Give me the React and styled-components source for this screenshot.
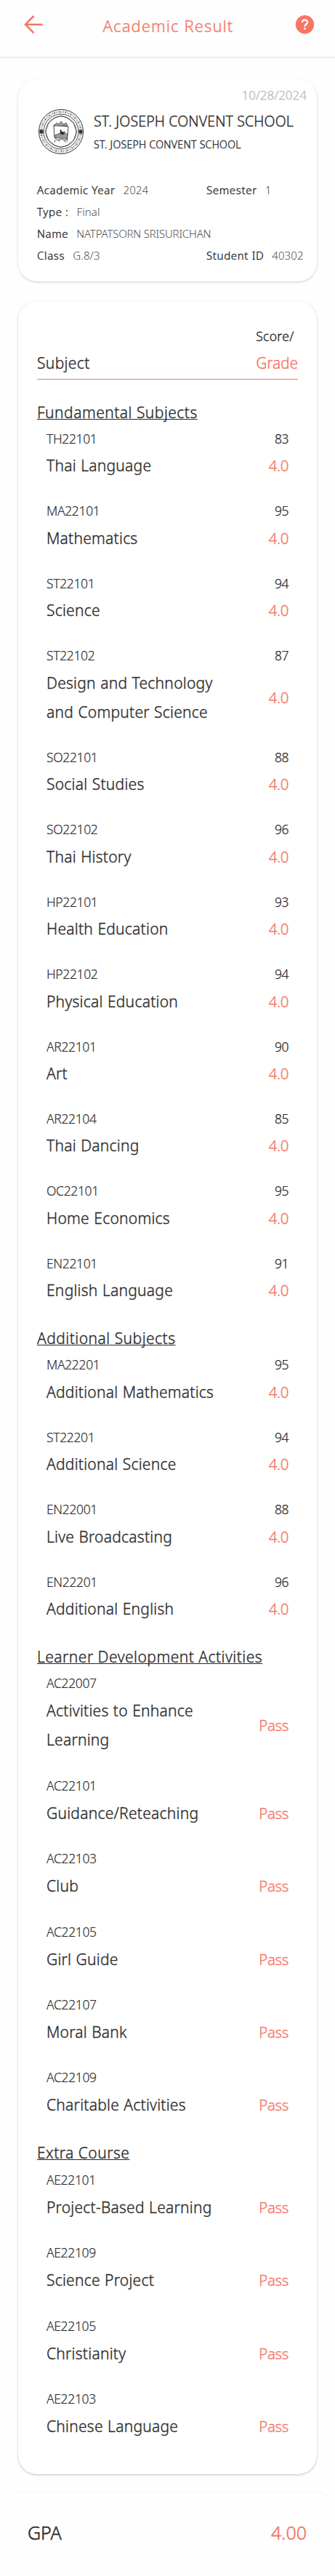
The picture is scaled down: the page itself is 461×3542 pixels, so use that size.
import React from "react";
import styled, { createGlobalStyle } from "styled-components";

const CORAL = "#f77567";

const GlobalStyle = createGlobalStyle`
  * { box-sizing: border-box; }
  body {
    margin: 0;
    background: #fefefe;
    color: #2a2a2a;
    font-family: "Noto Sans", "Open Sans", sans-serif;
    font-weight: 300;
    -webkit-text-stroke: 0.35px currentColor;
  }
`;

const Page = styled.div`
  width: 461px;
  height: 3542px;
  display: flex;
  flex-direction: column;
  overflow: hidden;
`;

const TopBar = styled.header`
  height: 80px;
  flex: none;
  display: flex;
  align-items: flex-start;
  justify-content: space-between;
  padding: 20px 28px 0 32px;
  border-bottom: 2px solid #ececec;
`;

const Title = styled.h1`
  margin: 0 2px 0 0;
  font-size: 22px;
  line-height: 30px;
  font-weight: 300;
  letter-spacing: 1.1px;
  color: ${CORAL};
`;

const Card = styled.section`
  flex: none;
  width: 411px;
  margin-left: 25px;
  border-radius: 26px;
  background: #fff;
  box-shadow: 0 1px 3px rgba(0, 0, 0, 0.2);
`;

const InfoCard = styled(Card)`
  height: 279px;
  margin-top: 28px;
  padding: 13px 14px 0 26px;
`;

const DateText = styled.div`
  text-align: right;
  font-size: 17px;
  line-height: 20px;
  color: #bbb;
`;

const School = styled.div`
  display: flex;
  gap: 13px;
  margin: 8px 0 0 1px;
`;

const SchoolNames = styled.div`
  padding-top: 1px;
`;

const SchoolName = styled.div`
  font-size: ${(p) => (p.$small ? 14 : 19.5)}px;
  line-height: ${(p) => (p.$small ? 31 : 33)}px;
  letter-spacing: ${(p) => (p.$small ? 0.32 : 0.15)}px;
  white-space: nowrap;
`;

const Details = styled.div`
  margin-top: 31.5px;
  display: grid;
  grid-template-columns: 233px 1fr;
  grid-auto-rows: 30.3px;
`;

const Detail = styled.div`
  font-size: 15px;
  line-height: 30px;
  letter-spacing: 0.65px;
  white-space: nowrap;
  grid-column: ${(p) => (p.$wide ? "1 / 3" : "auto")};
`;

const Value = styled.span`
  margin-left: 11px;
  letter-spacing: ${(p) => (p.$tight ? -0.2 : 0.1)}px;
  color: #4c4c4c;
  -webkit-text-stroke: 0;
`;

const ResultCard = styled(Card)`
  height: 2988px;
  margin-top: 27px;
  padding: 29px 26px 0;
  box-shadow: 0 1px 3px rgba(0, 0, 0, 0.25);
`;

const TableHead = styled.div`
  display: flex;
  justify-content: space-between;
  align-items: flex-end;
  height: 79px;
  padding-bottom: 1px;
  border-bottom: 1px solid ${CORAL};
  margin-bottom: 25px;
  font-size: 21px;
  line-height: 42px;
  letter-spacing: 0.35px;
`;

const ScoreHead = styled.div`
  font-size: 17.5px;
  line-height: 31px;
  letter-spacing: 0.3px;
`;

const GradeHead = styled.div`
  color: ${CORAL};
  letter-spacing: -0.15px;
`;

const GroupTitle = styled.h2`
  margin: 0;
  font-size: 21px;
  line-height: 40px;
  font-weight: 300;
  letter-spacing: 0.48px;
  text-decoration: underline;
  text-decoration-thickness: 1px;
  text-underline-offset: 1px;
  text-decoration-skip-ink: none;
  white-space: nowrap;
`;

const Row = styled.div`
  display: grid;
  grid-template-columns: 241px 1fr;
  grid-template-rows: ${(p) => (p.$pass ? 34.4 : 33.45)}px auto;
  align-items: center;
  padding: 0 13px 26px;
`;

const Code = styled.div`
  font-size: 17.5px;
  line-height: 33.4px;
  letter-spacing: -0.35px;
  -webkit-text-stroke-width: 0.15px;
`;

const Score = styled(Code)`
  text-align: right;
  letter-spacing: -0.5px;
  -webkit-text-stroke-width: 0.25px;
`;

const Subject = styled.div`
  font-size: 21px;
  line-height: 40px;
  letter-spacing: 0.25px;
  word-spacing: 0.6px;
`;

const Grade = styled(Subject)`
  text-align: right;
  font-size: 20.5px;
  letter-spacing: -0.4px;
  color: ${CORAL};
`;

const Footer = styled.footer`
  flex: 1;
  margin-top: 25px;
  border-radius: 26px 26px 0 0;
  box-shadow: 0 -1px 2px rgba(0, 0, 0, 0.04);
  display: flex;
  justify-content: space-between;
  padding: 35px 39px 0 38px;
  font-size: 25px;
  line-height: 40px;
  -webkit-text-stroke-width: 0.5px;
`;

const Gpa = styled.span`
  color: ${CORAL};
`;

const BackIcon = () => (
  <svg width="28" height="28" viewBox="0 0 28 28" fill="none" stroke={CORAL} strokeWidth="2.6">
    <path d="M26.500 13.700H3M14.500 2L3 13.700L14.500 25.300" />
  </svg>
);

const HelpIcon = () => (
  <svg width="28" height="28" viewBox="0 0 28 28">
    <circle cx="14.5" cy="13.7" r="12.7" fill={CORAL} />
    <path d="M10.800 11Q11 7.300 14.500 7.300Q18 7.500 18 10.600Q18 12.200 16.200 13.500Q14.500 14.700 14.500 16.500" fill="none" stroke="#fff" strokeWidth="2.300" />
    <circle cx="14.5" cy="19.4" r="1.4" fill="#fff" />
  </svg>
);

const Crest = () => (
  <svg width="64" height="64" viewBox="0 0 64 64" fill="none" stroke="#333">
    <circle cx="32" cy="32" r="30.5" strokeWidth="1" />
    <circle cx="32" cy="32" r="27.200" strokeWidth="3.200" strokeDasharray="1 1.400 1.800 1.200 .7 1.600" opacity=".6" />
    <circle cx="32" cy="32" r="24" strokeWidth=".9" />
    <circle cx="32" cy="32" r="21" strokeWidth=".8" />
    <path d="M32 10L41 13.500L49 20L53.500 32L49 44L41 50.500L32 54L23 50.500L15 44L10.500 32L15 20L23 13.500Z" strokeWidth=".7" />
    <path d="M2.500 32h5M56.500 32h5" strokeWidth="5" />
    <path d="M22 23L42 25L40.500 42L37 44L32 42L27 44L23 40Z" strokeWidth=".9" fill="#fff" />
    <path d="M22 24L26 20L29 22L32 18L35 22L39 20L41 24Z" strokeWidth=".8" fill="#aaa" />
    <path d="M23 37L31 34L41 35L40 42L32 41L24 41Z" fill="#999" strokeWidth=".6" />
    <path d="M31 29L34 33L38 32L35 36L31 35Z" fill="#222" strokeWidth=".5" />
    <path d="M24 43L23 47M29 43.500L30 46M37 44L38 47M41 42L40 46" strokeWidth=".8" />
  </svg>
);

const groups = [
  ["Fundamental Subjects", [
    ["TH22101", "Thai Language", 83],
    ["MA22101", "Mathematics", 95],
    ["ST22101", "Science", 94],
    ["ST22102", "Design and Technology and Computer Science", 87],
    ["SO22101", "Social Studies", 88],
    ["SO22102", "Thai History", 96],
    ["HP22101", "Health Education", 93],
    ["HP22102", "Physical Education", 94],
    ["AR22101", "Art", 90],
    ["AR22104", "Thai Dancing", 85],
    ["OC22101", "Home Economics", 95],
    ["EN22101", "English Language", 91],
  ]],
  ["Additional Subjects", [
    ["MA22201", "Additional Mathematics", 95],
    ["ST22201", "Additional Science", 94],
    ["EN22001", "Live Broadcasting", 88],
    ["EN22201", "Additional English", 96],
  ]],
  ["Learner Development Activities", [
    ["AC22007", "Activities to Enhance Learning"],
    ["AC22101", "Guidance/Reteaching"],
    ["AC22103", "Club"],
    ["AC22105", "Girl Guide"],
    ["AC22107", "Moral Bank"],
    ["AC22109", "Charitable Activities"],
  ]],
  ["Extra Course", [
    ["AE22101", "Project-Based Learning"],
    ["AE22109", "Science Project"],
    ["AE22105", "Christianity"],
    ["AE22103", "Chinese Language"],
  ]],
];

export default function App() {
  return (
    <Page>
      <GlobalStyle />
      <TopBar>
        <BackIcon />
        <Title>Academic Result</Title>
        <HelpIcon />
      </TopBar>
      <InfoCard>
        <DateText>10/28/2024</DateText>
        <School>
          <Crest />
          <SchoolNames>
            <SchoolName>ST. JOSEPH CONVENT SCHOOL</SchoolName>
            <SchoolName $small>ST. JOSEPH CONVENT SCHOOL</SchoolName>
          </SchoolNames>
        </School>
        <Details>
          <Detail>Academic Year<Value>2024</Value></Detail>
          <Detail>Semester<Value>1</Value></Detail>
          <Detail $wide>Type :<Value>Final</Value></Detail>
          <Detail $wide>Name<Value $tight>NATPATSORN SRISURICHAN</Value></Detail>
          <Detail>Class<Value>G.8/3</Value></Detail>
          <Detail>Student ID<Value>40302</Value></Detail>
        </Details>
      </InfoCard>
      <ResultCard>
        <TableHead>
          <div>Subject</div>
          <div>
            <ScoreHead>Score/</ScoreHead>
            <GradeHead>Grade</GradeHead>
          </div>
        </TableHead>
        {groups.map(([title, rows]) => (
          <React.Fragment key={title}>
            <GroupTitle>{title}</GroupTitle>
            {rows.map(([code, name, score]) => (
              <Row key={code} $pass={!score}>
                <Code>{code}</Code>
                <Score>{score}</Score>
                <Subject>{name}</Subject>
                <Grade>{score ? "4.0" : "Pass"}</Grade>
              </Row>
            ))}
          </React.Fragment>
        ))}
      </ResultCard>
      <Footer>
        <span>GPA</span>
        <Gpa>4.00</Gpa>
      </Footer>
    </Page>
  );
}
